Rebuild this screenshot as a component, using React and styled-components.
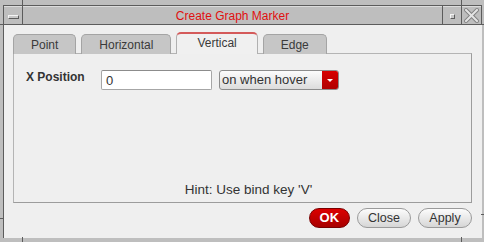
import React from "react";
import styled, { createGlobalStyle, css } from "styled-components";

const Global = createGlobalStyle`
  html, body { margin: 0; padding: 0; background: #bebebe; }
  body { font-family: "Liberation Sans", Arial, sans-serif; }
  * { box-sizing: border-box; }
`;

const Frame = styled.div`
  position: relative;
  width: 484px;
  height: 242px;
  background: #bebebe;
  padding: 5px 2px 4px 3px;
  overflow: hidden;
`;

const Tick = styled.span`
  position: absolute;
  background: #5c5c5c;
  ${(p) =>
    p.$v
      ? css`width: 1px; height: ${p.$len}px;`
      : css`height: 1px; width: ${p.$len}px;`}
  left: ${(p) => p.$x}px;
  top: ${(p) => p.$y}px;
`;

const Chrome = styled.div`
  height: 100%;
  display: flex;
  flex-direction: column;
  border-top: 1px solid #5c5c5c;
  border-left: 1px solid #5c5c5c;
`;

const TitleBar = styled.div`
  display: flex;
  height: 19px;
  border-bottom: 1px solid #5c5c5c;
  box-shadow: inset 0 1px 0 #dcdcdc;
  background: #bebebe;
`;

const TitleCell = styled.div`
  width: ${(p) => (p.$w ? `${p.$w}px` : "auto")};
  flex: ${(p) => (p.$w ? "none" : "1")};
  border-right: 1px solid #5c5c5c;
  display: flex;
  align-items: center;
  justify-content: center;
`;

const Title = styled.span`
  color: #e01010;
  font-size: 12px;
  line-height: 14px;
  padding-top: 1px;
`;

const Bevel = styled.span`
  display: block;
  width: ${(p) => p.$w}px;
  height: ${(p) => p.$h}px;
  border-top: 1px solid #f4f4f4;
  border-left: 1px solid #f4f4f4;
  border-right: 1px solid #5c5c5c;
  border-bottom: 1px solid #5c5c5c;
  background: #c8c8c8;
  margin-top: 3px;
`;

const Content = styled.div`
  flex: 1;
  background: #efefef;
  padding: 8px 9px 0 9px;
  display: flex;
  flex-direction: column;
`;

const Tabs = styled.div`
  display: flex;
  align-items: flex-end;
  gap: 5px;
  height: 21px;
  position: relative;
  z-index: 1;
  margin-bottom: -1px;
`;

const Tab = styled.div`
  height: ${(p) => (p.$active ? 22 : 20)}px;
  padding: 0 ${(p) => (p.$active ? 20 : 17)}px;
  border: 1px solid #a4a4a4;
  border-bottom: none;
  border-radius: 5px 5px 0 0;
  background: ${(p) => (p.$active ? "#f0f0f0" : "#c6c6c6")};
  color: #3a3a3a;
  font-size: 12px;
  line-height: 18px;
  display: flex;
  align-items: center;
  ${(p) =>
    p.$active &&
    css`
      border-top: 2px solid #d45a5a;
      border-left-color: #b0b0b0;
      border-right-color: #b0b0b0;
      padding-bottom: 2px;
    `}
`;

const Panel = styled.div`
  width: 459px;
  height: 150px;
  border: 1px solid #a8a8a8;
  border-color: #b4b4b4 #9c9c9c #9c9c9c #b4b4b4;
  display: flex;
  flex-direction: column;
  justify-content: space-between;
  padding: 16px 12px 5px 12px;
`;

const Row = styled.div`
  display: flex;
  align-items: center;
  height: 20px;
`;

const Label = styled.label`
  width: 75px;
  font-size: 12px;
  font-weight: bold;
  color: #333;
  padding-bottom: 7px;
`;

const Input = styled.div`
  width: 111px;
  height: 20px;
  background: #fff;
  border: 1px solid #a6a6a6;
  border-top-color: #8c8c8c;
  border-radius: 2px;
  font-size: 13px;
  color: #333;
  padding: 2px 4px;
  line-height: 15px;
  margin-right: 7px;
`;

const Select = styled.div`
  width: 120px;
  height: 20px;
  display: flex;
  border: 1px solid #8c8c8c;
  border-radius: 3px;
  overflow: hidden;
  background: linear-gradient(#fcfcfc, #dcdcdc);
`;

const SelectText = styled.span`
  flex: 1;
  font-size: 13px;
  color: #333;
  line-height: 18px;
  padding-left: 2px;
`;

const SelectArrow = styled.span`
  width: 16px;
  background: linear-gradient(#d80000, #b00000);
  display: flex;
  align-items: center;
  justify-content: center;
  &::after {
    content: "";
    border-left: 3px solid transparent;
    border-right: 3px solid transparent;
    border-top: 3px solid #fff;
  }
`;

const Hint = styled.div`
  font-size: 13.5px;
  color: #333;
  text-align: center;
  padding-left: 12px;
  line-height: 15px;
`;

const Buttons = styled.div`
  display: flex;
  justify-content: flex-end;
  gap: 7px;
  margin-top: 5px;
  width: 459px;
`;

const Button = styled.button`
  height: 20px;
  min-width: ${(p) => p.$w}px;
  padding: 0 10px;
  border-radius: 10px;
  font-family: "Liberation Sans", Arial, sans-serif;
  font-size: 12.5px;
  line-height: 16px;
  ${(p) =>
    p.$primary
      ? css`
          background: linear-gradient(#dc0000, #a80000);
          border: 1px solid #7a0000;
          color: #fff;
          font-weight: bold;
          font-size: 13px;
        `
      : css`
          background: linear-gradient(#fcfcfc, #d6d6d6);
          border: 1px solid #9a9a9a;
          color: #333;
        `}
`;

function CloseGlyph() {
  return (
    <svg width="15" height="15" viewBox="0 0 15 15">
      <path d="M2 2 L13 13 M13 2 L2 13" stroke="#808080" strokeWidth="4" strokeLinecap="square" fill="none" />
      <path d="M2 2 L13 13 M13 2 L2 13" stroke="#e4e4e4" strokeWidth="2" strokeLinecap="square" fill="none" />
    </svg>
  );
}

export default function App() {
  return (
    <>
      <Global />
      <Frame>
        <Tick $v $len={5} $x={22} $y={0} />
        <Tick $v $len={5} $x={461} $y={0} />
        <Tick $v $len={5} $x={22} $y={237} />
        <Tick $v $len={5} $x={461} $y={237} />
        <Tick $len={3} $x={0} $y={24} />
        <Tick $len={3} $x={0} $y={218} />
        <Tick $len={3} $x={481} $y={24} />
        <Tick $len={3} $x={481} $y={214} />
        <Chrome>
          <TitleBar>
            <TitleCell $w={19}>
              <Bevel $w={11} $h={4} />
            </TitleCell>
            <TitleCell>
              <Title>Create Graph Marker</Title>
            </TitleCell>
            <TitleCell $w={19}>
              <Bevel $w={5} $h={5} />
            </TitleCell>
            <TitleCell $w={20}>
              <CloseGlyph />
            </TitleCell>
          </TitleBar>
          <Content>
            <Tabs>
              <Tab>Point</Tab>
              <Tab>Horizontal</Tab>
              <Tab $active>Vertical</Tab>
              <Tab>Edge</Tab>
            </Tabs>
            <Panel>
              <Row>
                <Label>X Position</Label>
                <Input>0</Input>
                <Select>
                  <SelectText>on when hover</SelectText>
                  <SelectArrow />
                </Select>
              </Row>
              <Hint>Hint: Use bind key 'V'</Hint>
            </Panel>
            <Buttons>
              <Button $primary $w={38}>OK</Button>
              <Button $w={51}>Close</Button>
              <Button $w={54}>Apply</Button>
            </Buttons>
          </Content>
        </Chrome>
      </Frame>
    </>
  );
}
